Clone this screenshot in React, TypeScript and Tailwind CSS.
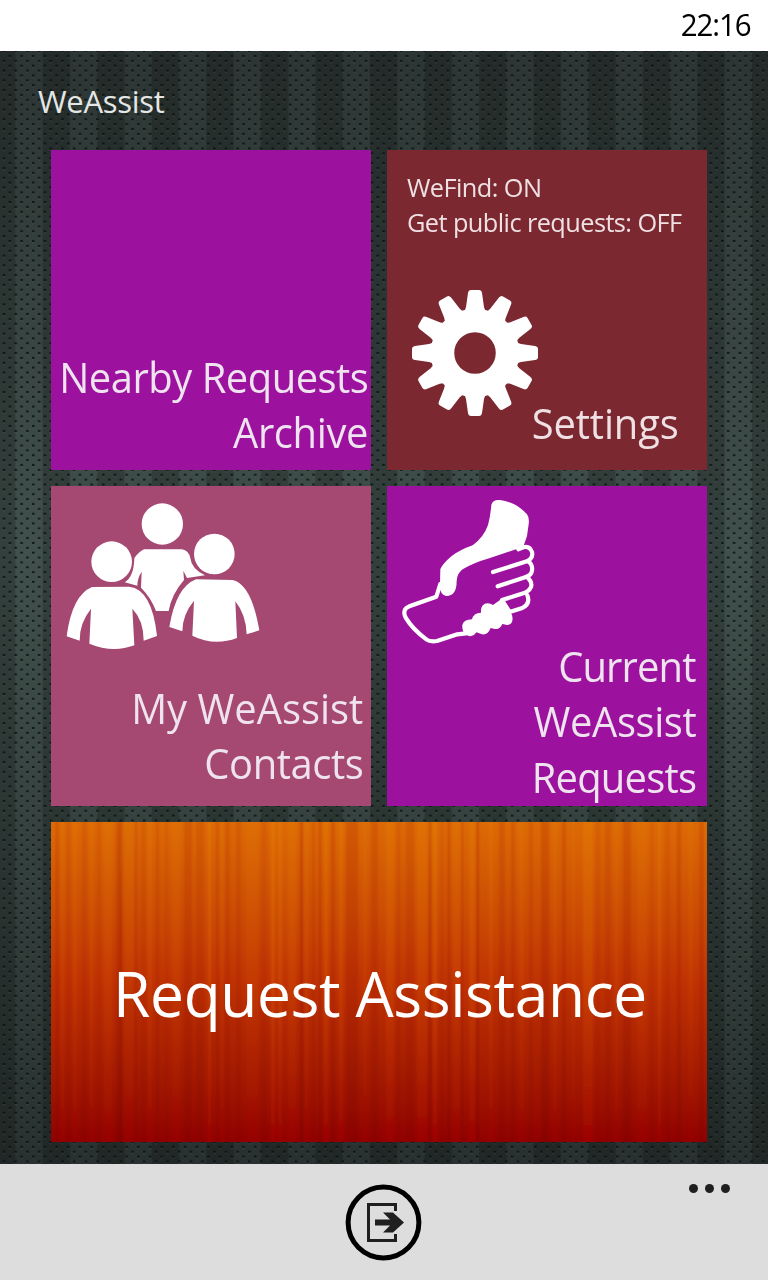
const stripes: [number, number, number][] = [
  // x, width, tone (positive is lighter)
  [4, 4, -0.12], [10, 3, 0.1], [15, 5, -0.08], [22, 4, 0.1], [31, 5, -0.09], [39, 3, 0.12],
  [46, 4, -0.08], [53, 8, 0.1], [65, 5, -0.16], [69, 2, -0.25], [74, 8, 0.08], [84, 2, -0.16],
  [90, 5, -0.08], [97, 4, 0.12], [105, 3, -0.12], [114, 3, -0.08], [121, 8, 0.08], [133, 8, -0.13],
  [145, 8, -0.1], [157, 3, 0.22], [165, 3, -0.12], [170, 2, 0.12], [174, 5, -0.11], [185, 5, -0.1],
  [195, 12, 0.08], [210, 6, -0.08], [220, 4, 0.22], [227, 4, 0.18], [237, 8, 0.12], [249, 3, -0.22],
  [254, 3, 0.12], [261, 3, -0.1], [268, 2, -0.2], [273, 4, 0.18], [280, 4, -0.14], [288, 4, 0.16],
  [295, 12, -0.14], [312, 4, 0.08], [320, 7, -0.12], [335, 8, 0.15], [346, 3, -0.1], [355, 8, -0.1],
  [366, 10, 0.15], [378, 2, -0.24], [382, 4, 0.22], [390, 2, -0.1], [397, 2, -0.2], [402, 7, 0.1],
  [410, 2, -0.18], [418, 6, 0.16], [425, 3, -0.2], [438, 4, 0.12], [448, 6, -0.12], [460, 4, -0.12],
  [468, 5, 0.1], [478, 4, -0.1], [490, 8, -0.15], [502, 4, 0.1], [511, 4, -0.14], [521, 3, 0.08],
  [532, 10, 0.18], [545, 4, -0.08], [554, 6, -0.1], [564, 3, 0.1], [572, 8, -0.14], [586, 10, 0.1],
  [600, 2, -0.1], [607, 3, 0.18], [614, 5, -0.08], [626, 4, -0.15], [637, 5, 0.08], [648, 5, -0.12],
]

const toothAngles = Array.from({ length: 12 }, (_, i) => i * 30)

function PerforatedBackdrop() {
  return (
    <svg className="absolute inset-0 h-full w-full" aria-hidden="true">
      <defs>
        <pattern id="bands" width="54.56" height="10" x="42.6" patternUnits="userSpaceOnUse">
          <rect width="27.3" height="10" fill="#000" fillOpacity="0.2" />
        </pattern>
        <pattern id="holes" width="11.68" height="9.74" x="8.6" y="3" patternUnits="userSpaceOnUse">
          <rect x="0" y="0.9" width="2.6" height="2.2" fill="#05100f" fillOpacity="0.8" />
          <rect x="0" y="3.3" width="2.6" height="0.8" fill="#6b8078" fillOpacity="0.28" />
          <rect x="5.84" y="5.77" width="2.6" height="2.2" fill="#05100f" fillOpacity="0.8" />
          <rect x="5.84" y="8.2" width="2.6" height="0.8" fill="#6b8078" fillOpacity="0.28" />
        </pattern>
      </defs>
      <rect width="100%" height="100%" fill="url(#bands)" />
      <rect width="100%" height="100%" fill="url(#holes)" />
    </svg>
  )
}

function GearIcon() {
  return (
    <svg className="absolute left-[24px] top-[139px] h-32 w-32" viewBox="-64 -64 128 128" fill="#fff">
      <circle r="32.5" fill="none" stroke="#fff" strokeWidth="23.5" />
      {toothAngles.map((angle) => (
        <path
          key={angle}
          transform={`rotate(${angle})`}
          d="M-12 -40 Q-9.5 -43 -9 -46 L-7 -60 Q-6.5 -63 -4 -63 L4 -63 Q6.5 -63 7 -60 L9 -46 Q9.5 -43 12 -40 Z"
        />
      ))}
    </svg>
  )
}

function PeopleIcon() {
  return (
    <svg className="absolute left-0 top-0 h-[170px] w-[230px]" viewBox="3 -12 690 510" fill="#fff">
      <circle cx="337" cy="102" r="62" />
      <path d="M282 178 L396 178 Q416 182 421 204 Q424 236 465 256 L411 264 L400 242 L402 270 Q365 312 356 363 L318 363 Q303 323 273 293 L275 245 Q262 264 262 287 L224 277 Q252 260 253 204 Q266 186 282 178 Z" />
      <circle cx="185" cy="215" r="61" />
      <circle cx="493" cy="192" r="61" />
      <path d="M126 291 L238 290 Q306 298 321 438 L281 452 Q281 391 247 356 L253 466 Q188 490 118 461 L123 356 Q88 400 89 452 L50 439 Q66 316 126 291 Z" />
      <path d="M438 268 L548 270 Q604 282 628 421 L590 433 Q588 374 556 334 L561 444 Q492 470 427 437 L432 332 Q397 374 397 424 L358 411 Q378 291 438 268 Z" />
    </svg>
  )
}

function HandsIcon() {
  return (
    <svg className="absolute left-[3px] top-[4px] h-[165px] w-[170px]" viewBox="0 0 510 495" fill="none">
      <path
        d="M304 44 Q308 28 330 30 Q379 37 411 73 Q419 84 416 103 L411 138 L400 170 L300 204 Q248 219 218 238 Q201 250 200 273 Q200 318 169 318 Q148 315 150 282 L151 237 Q157 222 185 198 Q211 179 248 166 Q281 142 294 105 Q302 75 304 44 Z"
        fill="#fff"
      />
      <g stroke="#fff" strokeWidth="12.5" strokeLinecap="round" strokeLinejoin="round">
        <path d="M151 282 L139 320 L58 349 Q35 358 47 383 Q67 417 110 449 Q120 456 141 453 L202 433 L228 430" />
        <path d="M385 178 L400 172 Q418 166 426 186 Q430 204 413 213 L309 246" />
        <path d="M413 213 Q429 223 426 242 Q424 255 410 260 L323 289" />
        <path d="M410 260 Q428 276 423 291 Q417 306 393 312 L336 330 L359 366 L397 354 Q422 341 412 316" />
      </g>
      <path
        d="M273 368 Q271 341 293 340 Q302 340 309 345 L329 331 Q342 328 347 345 L366 375 Q373 403 351 405 L337 402 Q329 421 311 416 L302 414 Q293 436 276 433 L259 427 Q247 444 231 436 Q215 427 217 405 Q221 389 246 388 Q250 369 273 368 Z"
        fill="#fff"
      />
    </svg>
  )
}

function CurtainFill() {
  return (
    <svg className="absolute inset-0 h-full w-full" viewBox="0 0 656 320" preserveAspectRatio="none" aria-hidden="true">
      <defs>
        <filter id="soften" x="0" y="0" width="100%" height="100%">
          <feGaussianBlur stdDeviation="0.8 0" />
        </filter>
        <linearGradient id="light" gradientUnits="userSpaceOnUse" x1="0" y1="0" x2="0" y2="320">
          <stop offset="0" stopColor="#f29a08" />
          <stop offset="0.5" stopColor="#f07a00" />
          <stop offset="1" stopColor="#c80c00" />
        </linearGradient>
        <linearGradient id="shade" gradientUnits="userSpaceOnUse" x1="0" y1="0" x2="0" y2="320">
          <stop offset="0" stopColor="#a01800" />
          <stop offset="1" stopColor="#600000" />
        </linearGradient>
      </defs>
      <g filter="url(#soften)">
        {stripes.map(([x, width, tone]) => (
          <rect
            key={x}
            x={x}
            width={width}
            height="320"
            fill={tone > 0 ? 'url(#light)' : 'url(#shade)'}
            fillOpacity={Math.abs(tone) * 1.1}
          />
        ))}
      </g>
    </svg>
  )
}

function ExitIcon() {
  return (
    <svg className="h-[78px] w-[78px]" viewBox="0 0 78 78" fill="none">
      <circle cx="38.5" cy="39.5" r="35.4" stroke="#000" strokeWidth="5" />
      <path d="M50.5 28 V21.5 H23.5 V57.5 H50.5 V51" stroke="#1f1f1f" strokeWidth="3" />
      <path d="M30 36.5 H45 L38 29.5 H48 L59 39.5 L48 49.5 H38 L45 42.5 H30 Z" fill="#1f1f1f" />
    </svg>
  )
}

export default function App() {
  return (
    <div className="flex h-[1280px] w-[768px] flex-col overflow-hidden bg-white font-['Open_Sans',sans-serif] text-[#eee3ee]">
      <header className="flex h-[51px] shrink-0 items-center justify-end pb-[2px] pr-[17px] text-[31px] text-black">
        <span className="origin-right scale-x-95 tracking-[-1.1px]">22:16</span>
      </header>

      <main className="relative flex h-[1113px] shrink-0 flex-col bg-linear-to-b from-[#2c3533] via-[#41504c] via-45% to-[#28312f]">
        <PerforatedBackdrop />
        <h1 className="relative h-[99px] pl-[38px] pt-[28px] text-[31px] leading-[44px] tracking-[-0.3px] text-[#e4e7e6]">
          WeAssist
        </h1>

        <div className="relative ml-[51px] grid w-[656px] grid-cols-2 gap-4">
          <button className="flex h-80 flex-col items-end justify-end bg-[#9c129f] pb-[11px] pr-[3px] text-right text-[42px] leading-[55px] whitespace-nowrap">
            <span className="origin-right scale-x-95 tracking-[-0.5px]">Nearby Requests</span>
            <span className="origin-right scale-x-95 tracking-[-0.4px]">Archive</span>
          </button>

          <button className="relative flex h-80 flex-col justify-between bg-[#7b2831] pb-[20px] pl-[20px] pr-[28px] pt-[20px] text-left text-[#efe1e3]">
            <span className="origin-left scale-x-[0.975] text-[26px] leading-[35px] tracking-[-0.6px] whitespace-nowrap">
              WeFind: ON
              <br />
              Get public requests: OFF
            </span>
            <GearIcon />
            <span className="origin-right scale-x-95 self-end text-[42px] leading-[55px] tracking-[-0.15px]">
              Settings
            </span>
          </button>

          <button className="relative flex h-80 flex-col items-end justify-end bg-[#a54872] pb-[16px] pr-[8px] text-right text-[42px] leading-[55px] whitespace-nowrap">
            <PeopleIcon />
            <span className="origin-right scale-x-95">My WeAssist</span>
            <span className="origin-right scale-x-95 tracking-[-0.45px]">Contacts</span>
          </button>

          <button className="relative flex h-80 flex-col items-end justify-end bg-[#9c129f] pb-[2px] pr-[11px] text-right text-[42px] leading-[55.5px]">
            <HandsIcon />
            <span className="origin-right scale-x-95 tracking-[-0.9px]">Current</span>
            <span className="origin-right scale-x-95 tracking-[-0.4px]">WeAssist</span>
            <span className="origin-right scale-x-95 tracking-[-0.8px]">Requests</span>
          </button>

          <button className="relative col-span-2 flex h-80 items-center justify-center bg-linear-to-b from-[#dc6a05] via-[#bf3203] via-50% to-[#910000] text-[63px] text-white">
            <CurtainFill />
            <span className="relative left-px top-[11px] scale-x-96 tracking-[-0.4px]">Request Assistance</span>
          </button>
        </div>
      </main>

      <footer className="relative flex h-[116px] justify-center bg-[#dddddd] pt-[19px]">
        <button className="h-[78px]">
          <ExitIcon />
        </button>
        <div className="absolute right-[38px] top-[20px] flex gap-[7px]">
          <i className="h-[9px] w-[9px] rounded-full bg-[#1f1f1f]" />
          <i className="h-[9px] w-[9px] rounded-full bg-[#1f1f1f]" />
          <i className="h-[9px] w-[9px] rounded-full bg-[#1f1f1f]" />
        </div>
      </footer>
    </div>
  )
}
